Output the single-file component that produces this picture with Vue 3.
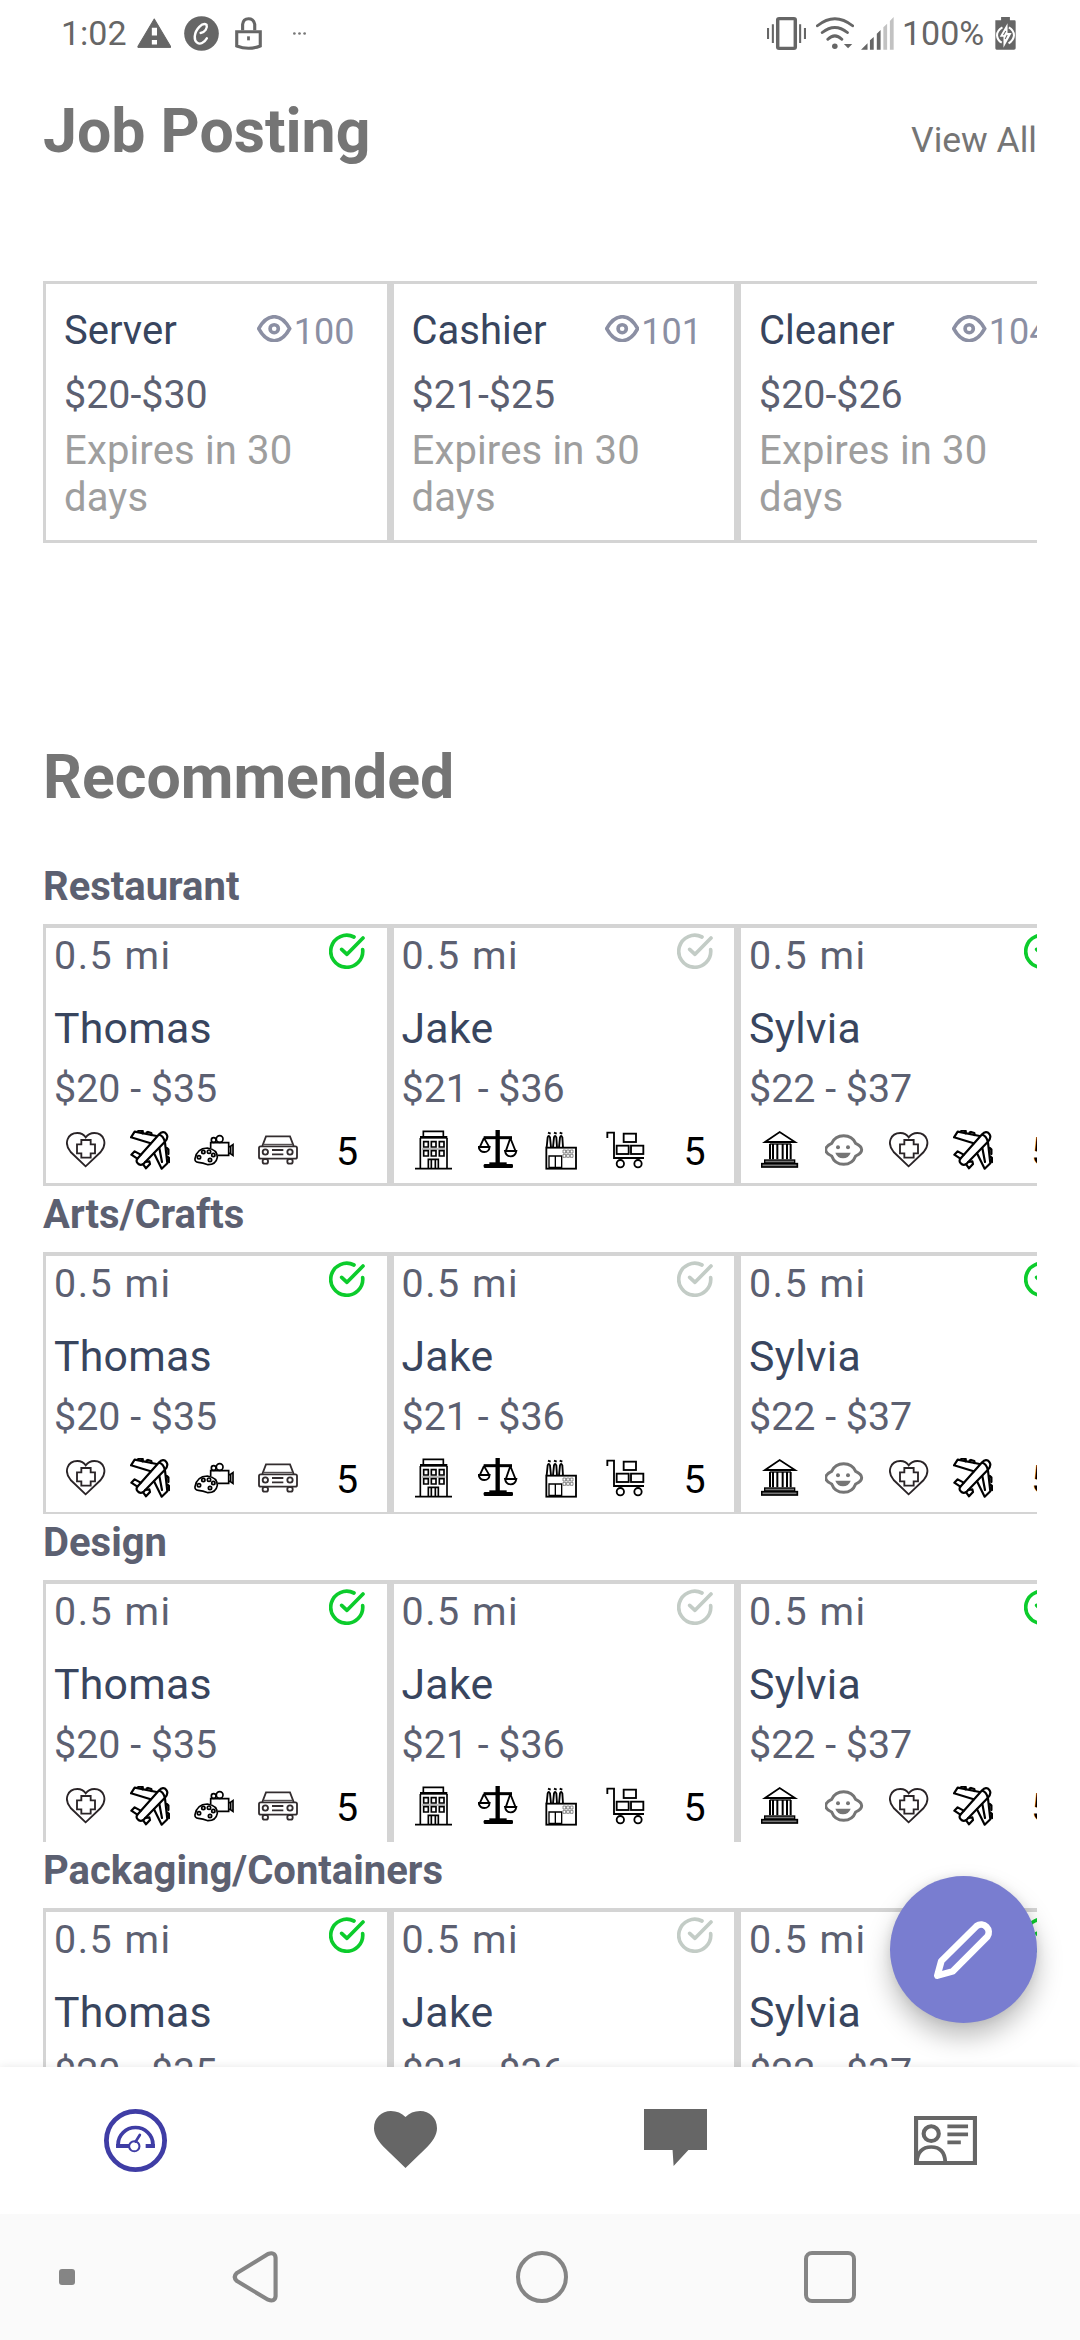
<template>
  <div class="screen">
    <!-- Status bar -->
    <div class="status-bar">
      <div class="status-left">
        <span class="clock">1:02</span>
        <svg class="ic-warn" viewBox="0 0 100 91" preserveAspectRatio="none">
          <path d="M50 3 L97 84 Q98 89 93 89 H7 Q2 89 3 84 Z" fill="#666" stroke="#666" stroke-width="3" stroke-linejoin="round" />
          <path d="M43 29 h15 v23 h-15 z M43 66 h15 v13 h-15 z" fill="#fff" />
        </svg>
        <svg class="ic-c" viewBox="0 0 101 105" preserveAspectRatio="none">
          <ellipse cx="50.500" cy="52.500" rx="50" ry="52" fill="#666" />
          <path d="M45 49 C57 48 66 34 62 24 C50 16 30 38 28 59 C27 78 40 84 49 79 C55 76 60 71 63 65" transform="translate(3 2)" fill="none" stroke="#fff" stroke-width="7" stroke-linecap="round" />
        </svg>
        <svg class="ic-lock" viewBox="0 0 78 99" preserveAspectRatio="none">
          <path d="M22 40 V22 Q24 5 39 5 Q54 5 57 22 V40" fill="none" stroke="#666" stroke-width="9" />
          <path d="M5 44 H73 V87 Q39 101 5 87 Z" fill="none" stroke="#666" stroke-width="9" />
          <path d="M35 58 h8 v12 h-8 z" fill="#666" />
        </svg>
        <svg class="ic-dots" viewBox="0 0 38 8">
          <circle cx="4" cy="4" r="4" fill="#777" />
          <circle cx="19" cy="4" r="4" fill="#777" />
          <circle cx="34" cy="4" r="4" fill="#777" />
        </svg>
      </div>
      <div class="status-right">
        <svg class="ic-vib" viewBox="0 0 113 99" preserveAspectRatio="none">
          <rect x="31" y="5" width="51" height="89" rx="4" fill="none" stroke="#666" stroke-width="10" />
          <path d="M3 33 V66 M17 22 V78 M96 22 V78 M110 33 V66" stroke="#666" stroke-width="6" fill="none" />
        </svg>
        <svg class="ic-wifi" viewBox="0 0 109 98" preserveAspectRatio="none">
          <path d="M4 26 Q54 -16 105 26 M18 46 Q54 16 90 46 M34 66 Q54 46 74 66" fill="none" stroke="#666" stroke-width="8.500" stroke-linecap="round" />
          <circle cx="54" cy="87" r="8" fill="#666" />
          <path d="M80 80 H104 L92 93 Z" fill="#666" />
        </svg>
        <svg class="ic-signal" viewBox="0 0 96 99" preserveAspectRatio="none">
          <path d="M0 98 L19 79 V98 Z M26 70 L37 60 V98 H26 Z M46 50 L57 39 V98 H46 Z" fill="#666" />
          <path d="M65 31 L76 20 V98 H65 Z M84 12 L95 0 V98 H84 Z" fill="#c2c2c2" />
        </svg>
        <span class="battery-text">100%</span>
        <svg class="ic-batt" viewBox="0 0 62 99" preserveAspectRatio="none">
          <path d="M18 0 H44 V10 H58 Q61 10 61 14 V94 Q61 98 56 98 H5 Q1 98 1 94 V10 H18 Z" fill="#666" />
          <path d="M22 31 Q6 40 6 55 Q7 70 20 77 M41 31 Q56 40 56 55 Q55 70 40 79" fill="none" stroke="#fff" stroke-width="6" />
          <path d="M37 19 L14 59 H25 V92 L49 48 H37 Z" fill="#fff" />
          <path d="M32 42 L25 54 M30 66 L36 54" stroke="#666" stroke-width="3" />
        </svg>
      </div>
    </div>

    <!-- Page content -->
    <main class="content">
      <header class="page-header">
        <h1>Job Posting</h1>
        <a class="view-all">View All</a>
      </header>

      <div class="row job-row">
        <article v-for="job in jobs" :key="job.title" class="card job-card">
          <div class="job-head">
            <span class="job-title">{{ job.title }}</span>
            <span class="views">
              <svg viewBox="0 0 100 82" preserveAspectRatio="none" class="eye">
                <path d="M5 41 C18 16 34 5 50 5 C66 5 82 16 95 41 C82 66 66 77 50 77 C34 77 18 66 5 41 Z" />
                <circle cx="50" cy="41" r="12" />
              </svg>
              <span class="views-count">{{ job.views }}</span>
            </span>
          </div>
          <p class="job-pay">{{ job.pay }}</p>
          <p class="job-expires">Expires in 30 days</p>
        </article>
      </div>

      <h1 class="recommended">Recommended</h1>

      <section v-for="category in categories" :key="category" class="category">
        <h2>{{ category }}</h2>
        <div class="row person-row">
          <article v-for="person in people" :key="person.name" class="card person-card">
            <div class="person-head">
              <span class="distance">0.5 mi</span>
              <svg class="check" :class="{ on: person.checked }" viewBox="0 0 108 108">
                <path d="M75 12 A48 48 0 1 0 101 50" />
                <path d="M38 49 L54 64 L102 15" />
              </svg>
            </div>
            <p class="name">{{ person.name }}</p>
            <p class="pay">{{ person.pay }}</p>
            <div class="skills">
              <svg v-for="icon in person.icons" :key="icon" class="skill" viewBox="0 0 120 120" v-html="icons[icon]"></svg>
              <span class="count">5</span>
            </div>
          </article>
        </div>
      </section>
    </main>

    <button class="fab" aria-label="Edit">
      <svg viewBox="0 0 441 441">
        <path d="M142 299 L154 255 L260 150 A23 23 0 0 1 292 182 L188 286 Z" />
      </svg>
    </button>

    <!-- Tabs -->
    <nav class="tabs">
      <a class="tab">
        <svg width="63" height="63" viewBox="0 0 183 189" preserveAspectRatio="none" fill="none" stroke="#3f3da5">
          <ellipse cx="91.500" cy="94.500" rx="84.500" ry="87.500" stroke-width="14" />
          <path d="M41 111 V106 A50 50 0 0 1 142 106 V111" stroke-width="11" />
          <path d="M35 111 H74 M121 111 H148" stroke-width="12" />
          <circle cx="88" cy="112" r="15" stroke-width="6" />
          <path d="M92 98 L104 78" stroke-width="8" stroke-linecap="round" />
        </svg>
      </a>
      <a class="tab">
        <svg class="heart" width="63" height="57" viewBox="0 0 182 171" preserveAspectRatio="none" fill="#666">
          <path d="M91 171 L35 115 C12 92 0 72 0 52 C0 20 22 0 49 0 C66 0 80 6 91 18 C102 6 116 0 133 0 C160 0 182 20 182 52 C182 72 170 92 147 115 Z" />
        </svg>
      </a>
      <a class="tab">
        <svg class="chat" width="63" height="57" viewBox="0 0 183 171" preserveAspectRatio="none" fill="#666">
          <path d="M0 0 H183 V123 H129 L86 171 L83 123 H0 Z" />
        </svg>
      </a>
      <a class="tab">
        <svg width="63" height="49" viewBox="0 0 183 147" preserveAspectRatio="none" fill="none" stroke="#666" stroke-width="12">
          <rect x="6" y="6" width="171" height="135" />
          <circle cx="50" cy="53" r="22" />
          <path d="M8 139 Q11 93 50 93 Q89 93 91 139" stroke-width="11" />
          <path d="M97 31 H157 M97 55 H157 M97 79 H136" stroke-width="11" />
        </svg>
      </a>
    </nav>

    <!-- System navigation -->
    <div class="system-nav">
      <span class="nav-dot"></span>
      <svg class="nav-back" viewBox="0 0 133 156" preserveAspectRatio="none">
        <path d="M104 9 L14 66 Q2 78 14 90 L104 146 Q124 154 126 136 V20 Q124 2 104 9 Z" />
      </svg>
      <span class="nav-home"></span>
      <span class="nav-recent"></span>
    </div>
  </div>
</template>

<script setup>
import { ref } from 'vue';

const jobs = ref([
  { title: 'Server', views: 100, pay: '$20-$30' },
  { title: 'Cashier', views: 101, pay: '$21-$25' },
  { title: 'Cleaner', views: 104, pay: '$20-$26' },
]);

const categories = ref(['Restaurant', 'Arts/Crafts', 'Design', 'Packaging/Containers']);

const people = ref([
  { name: 'Thomas', pay: '$20 - $35', checked: true, icons: ['health', 'plane', 'media', 'car'] },
  { name: 'Jake', pay: '$21 - $36', checked: false, icons: ['building', 'scales', 'factory', 'cart'] },
  { name: 'Sylvia', pay: '$22 - $37', checked: true, icons: ['bank', 'child', 'health', 'plane'] },
]);

// Skill icons, all drawn on a 120x120 grid
const icons = {
  health: `<g fill="none" stroke="#2a2427" stroke-width="5.5">
    <path d="M59 109 L14 66 C-8 40 5 9 34 9 C46 9 54 14 59 22 C65 14 73 9 85 9 C113 9 126 40 104 66 Z"/>
    <path d="M46 30 H74 V43 H87 V70 H74 V83 H46 V70 H33 V43 H46 Z"/></g>`,
  plane: `<g fill="none" stroke="#000" stroke-width="6.5" stroke-linejoin="round" stroke-linecap="round">
    <path d="M22 86 L86 14 Q100 0 109 12 Q117 22 104 36 L40 102 Q30 108 23 100 Q17 94 22 86 Z"/>
    <path d="M88 14 Q100 18 104 34"/>
    <path d="M62 40 L3 22 L14 5 L80 18"/>
    <path d="M72 70 L95 116 L112 100 L105 38 M88 54 L96 96"/>
    <path d="M24 4 L28 1 L38 3 V10 M50 8 L54 6 L64 9 V15 M110 54 L115 58 V72 M112 80 L117 84 V96" stroke-width="7"/>
    <path d="M32 74 L14 64 L4 74 L22 86 M46 96 L58 94 L60 102 L48 115 L40 104"/></g>`,
  media: `<g fill="none" stroke="#000" stroke-width="5">
    <path d="M3 86 Q8 55 40 54 Q70 58 70 82 Q66 104 42 104 Q26 98 13 97 Q2 96 3 86 Z"/>
    <circle cx="28" cy="66" r="5"/><circle cx="45" cy="65" r="5"/><circle cx="58" cy="75" r="5"/><circle cx="48" cy="90" r="5"/><circle cx="15" cy="82" r="5"/>
    <path d="M50 54 V38 H104 V76 H72"/>
    <circle cx="77" cy="27" r="10"/><circle cx="59" cy="30" r="7"/>
    <path d="M104 50 H108 L117 44 V76 L108 70 H104 M110 48 V72"/></g>`,
  car: `<g fill="none" stroke="#332d2f" stroke-width="5.5">
    <path d="M13 48 L24 19 H96 L107 48"/><path d="M18 43 H102" stroke-width="3"/>
    <rect x="3" y="49" width="114" height="37" rx="5"/>
    <circle cx="22" cy="66" r="8"/><circle cx="96" cy="66" r="8"/>
    <path d="M42 60 H76 M42 73 H76"/>
    <rect x="14" y="87" width="16" height="14" rx="6"/><rect x="88" y="87" width="16" height="14" rx="6"/></g>`,
  building: `<g fill="none" stroke="#000" stroke-width="5">
    <path d="M28 18 V4 H88 V18"/><path d="M18 22 H100" stroke-width="8"/>
    <path d="M19 24 V115 M99 24 V115"/><path d="M3 116 H114"/>
    <path d="M29 35 h14 v16 h-14 z M52 35 h14 v16 h-14 z M76 35 h14 v16 h-14 z M29 62 h14 v16 h-14 z M52 62 h14 v16 h-14 z M76 62 h14 v16 h-14 z"/>
    <path d="M43 116 V88 H73 V116 M52 90 V116 M64 90 V116"/></g>
    <path d="M24 57 H94" stroke="#777" stroke-width="3"/>`,
  scales: `<g fill="none" stroke="#000" stroke-width="5.5">
    <path d="M59 0 V104" stroke-width="13"/><path d="M17 23 H102" stroke-width="9"/>
    <rect x="17" y="102" width="88" height="12" rx="4" fill="#000" stroke="none"/><path d="M34 100 H86" stroke-width="6"/>
    <path d="M18 24 L6 50 M18 24 L33 50 M2 51 H35 Q33 66 19 66 Q5 66 2 51 Z"/>
    <path d="M97 24 L84 62 M97 24 L112 62 M81 63 H115 Q112 79 98 79 Q84 79 81 63 Z"/></g>`,
  factory: `<g fill="none" stroke="#000" stroke-width="5.5">
    <rect x="13" y="53" width="89" height="63"/>
    <path d="M14 52 L17 22 Q20 14 24 22 L27 52 M33 52 L36 22 Q39 14 43 22 L45 52 M51 52 L54 22 Q57 14 61 22 L63 52"/>
    <path d="M18 8 L26 11 M36 8 L44 11 M53 8 L61 11" stroke-width="6"/>
    <path d="M21 78 H59 V112 H21 Z M40 78 V112" stroke-width="4"/></g>
    <path d="M63 60 h8 v9 h-8 z M74 60 h8 v9 h-8 z M85 60 h8 v9 h-8 z M63 73 h8 v9 h-8 z M74 73 h8 v9 h-8 z M85 73 h8 v9 h-8 z" fill="none" stroke="#555" stroke-width="2"/>`,
  cart: `<g fill="none" stroke="#000" stroke-width="5.5">
    <path d="M4 24 V8 H24 V84 H114"/>
    <rect x="53" y="11" width="37" height="25"/><rect x="32" y="47" width="36" height="25"/><rect x="75" y="47" width="37" height="25"/>
    <circle cx="43" cy="101" r="11"/><circle cx="96" cy="101" r="11"/></g>`,
  bank: `<g fill="none" stroke="#000" stroke-width="5.5">
    <path d="M12 36 L56 6 L102 36 Z"/><path d="M26 42 H90" stroke-width="4"/>
    <path d="M27 42 V88 M36 42 V88 M49 42 V88 M65 42 V88 M78 42 V88 M89 42 V88" stroke-width="6"/>
    <rect x="11" y="90" width="90" height="9" fill="#777" stroke-width="4"/><rect x="2" y="101" width="107" height="10" fill="#777" stroke-width="5"/></g>`,
  child: `<g fill="none" stroke="#757575" stroke-width="9">
    <path d="M54 17 C72 17 84 26 90 40 Q108 48 108 59 Q108 70 90 78 C84 94 70 103 54 103 C38 103 24 94 18 78 Q0 70 0 59 Q0 48 18 40 C24 26 36 17 54 17 Z" transform="translate(2 0)"/></g>
    <g fill="#757575"><circle cx="39" cy="52" r="6"/><circle cx="69" cy="52" r="6"/><path d="M31 68 H77 Q71 85 54 85 Q37 85 31 68 Z"/></g>`,
};
</script>

<style>
body {
  margin: 0;
}
</style>

<style scoped>
.screen {
  position: relative;
  display: flex;
  flex-direction: column;
  width: 1080px;
  height: 2340px;
  overflow: hidden;
  background: #fff;
  font-family: Roboto, sans-serif;
  color: #5c6071;
}

h1,
h2,
p {
  margin: 0;
}

svg {
  display: block;
  flex-shrink: 0;
}

/* status bar */
.status-bar {
  display: flex;
  justify-content: space-between;
  box-sizing: border-box;
  height: 66px;
  padding: 0 64px 0 61px;
  color: #666;
  font-size: 34px;
  line-height: 66px;
}

.status-left,
.status-right {
  display: flex;
  align-items: center;
}

.clock {
  width: 76px;
}

.ic-warn {
  width: 34.500px;
  height: 30.500px;
}

.ic-c {
  width: 35px;
  height: 35px;
  margin-left: 12.500px;
}

.ic-lock {
  width: 27px;
  height: 33px;
  margin-left: 16px;
}

.ic-dots {
  width: 13px;
  height: 3px;
  margin-left: 31px;
}

.ic-vib {
  width: 39px;
  height: 33px;
}

.ic-wifi {
  width: 38px;
  height: 33px;
  margin-left: 10px;
}

.ic-signal {
  width: 33px;
  height: 33px;
  margin-left: 7px;
}

.battery-text {
  width: 93px;
  margin-left: 8.500px;
}

.ic-batt {
  width: 21px;
  height: 33px;
}

/* content */
.content {
  box-sizing: border-box;
  height: 2001px;
  padding: 30.200px 43px 0;
  overflow: hidden;
}

.page-header {
  display: flex;
  justify-content: space-between;
  align-items: baseline;
  height: 72px;
}

h1 {
  color: #757575;
  font-size: 60.800px;
  font-weight: 700;
  line-height: 72px;
}

.view-all {
  color: #757575;
  font-size: 35.500px;
}

.row {
  display: flex;
  overflow: hidden;
}

.card {
  box-sizing: border-box;
  flex: none;
  width: 347.500px;
  border: solid #d4d4d4;
  border-width: 3px 4px 3px 3px;
}

.job-row {
  margin-top: 112.800px;
}

.job-card {
  height: 262px;
  padding: 23px 32px 0 18px;
}

.job-head {
  display: flex;
  justify-content: space-between;
  height: 47px;
}

.job-title {
  color: #38455e;
  font-size: 40px;
  line-height: 47px;
}

.views {
  display: flex;
  color: #8b8fa3;
}

.eye {
  width: 34.400px;
  height: 27.300px;
  margin-top: 8px;
  fill: none;
  stroke: #8b8fa3;
  stroke-width: 10.500;
}

.views-count {
  margin-left: 2px;
  font-size: 36px;
  line-height: 50px;
}

.job-pay {
  margin-top: 18.500px;
  font-size: 39.400px;
  line-height: 46px;
}

.job-expires {
  margin-top: 8.500px;
  color: #9e9e9e;
  font-size: 40px;
  letter-spacing: 0.150px;
  line-height: 47px;
}

.recommended {
  margin-top: 199.200px;
  margin-bottom: 50px;
}

/* recommended categories */
.category {
  height: 328px;
}

h2 {
  height: 46px;
  margin-bottom: 13.800px;
  font-size: 40px;
  font-weight: 700;
  line-height: 46px;
}

.person-row {
  height: 262px;
}

.person-card {
  height: 262px;
  padding: 5px 21.500px 0 8px;
  border-top-width: 4px;
}

/* lower rows run slightly past their viewport */
.category:nth-of-type(2) .person-card {
  height: 263px;
}

.category:nth-of-type(3) .person-card {
  height: 265px;
}

.person-head {
  display: flex;
  justify-content: space-between;
  height: 46px;
}

.distance {
  font-size: 39.400px;
  letter-spacing: 1.500px;
  line-height: 46px;
}

.check {
  width: 36px;
  height: 36px;
  fill: none;
  stroke: #c3ccc6;
  stroke-width: 11;
  stroke-linecap: round;
  stroke-linejoin: round;
}

.check.on {
  stroke: #0ccc2c;
}

.name {
  margin-top: 25px;
  color: #38455e;
  font-size: 42.800px;
  letter-spacing: 0.250px;
  line-height: 49px;
}

.pay {
  margin-top: 13px;
  font-size: 39.400px;
  line-height: 46px;
}

.skills {
  display: flex;
  gap: 24px;
  margin-top: 18px;
  padding-left: 12px;
}

.skill {
  width: 40px;
  height: 40px;
}

.count {
  margin-left: 14px;
  color: #000;
  font-size: 39.400px;
  line-height: 44px;
}

/* floating button */
.fab {
  position: absolute;
  top: 1876px;
  left: 890px;
  width: 147px;
  height: 147px;
  padding: 0;
  border: 0;
  border-radius: 50%;
  background: #797dd0;
  box-shadow: 0 14px 26px rgba(0, 0, 0, 0.26), 0 0 10px rgba(0, 0, 0, 0.08);
}

.fab svg {
  width: 147px;
  height: 147px;
  fill: none;
  stroke: #fff;
  stroke-width: 20;
  stroke-linejoin: round;
}

/* tabs */
.tabs {
  position: relative;
  display: grid;
  grid-template-columns: repeat(4, 1fr);
  height: 147px;
  background: #fff;
  box-shadow: 0 -1px 8px rgba(0, 0, 0, 0.08);
}

.tab {
  display: flex;
  align-items: center;
  justify-content: center;
}

.heart {
  margin-bottom: 2px;
}

.chat {
  margin-bottom: 6px;
}

/* system navigation */
.system-nav {
  position: relative;
  display: flex;
  align-items: center;
  box-sizing: border-box;
  height: 126px;
  padding-left: 59px;
  background: #fafafa;
}

.nav-dot {
  width: 16px;
  height: 16px;
  border-radius: 3px;
  background: #858585;
}

.nav-back {
  width: 46px;
  height: 52px;
  margin-left: 157px;
  fill: none;
  stroke: #858585;
  stroke-width: 12;
}

.nav-home,
.nav-recent {
  box-sizing: border-box;
  width: 52px;
  height: 52px;
  border: 4px solid #858585;
}

.nav-home {
  margin-left: 238px;
  border-radius: 50%;
}

.nav-recent {
  margin-left: 236px;
  border-radius: 8px;
}
</style>
